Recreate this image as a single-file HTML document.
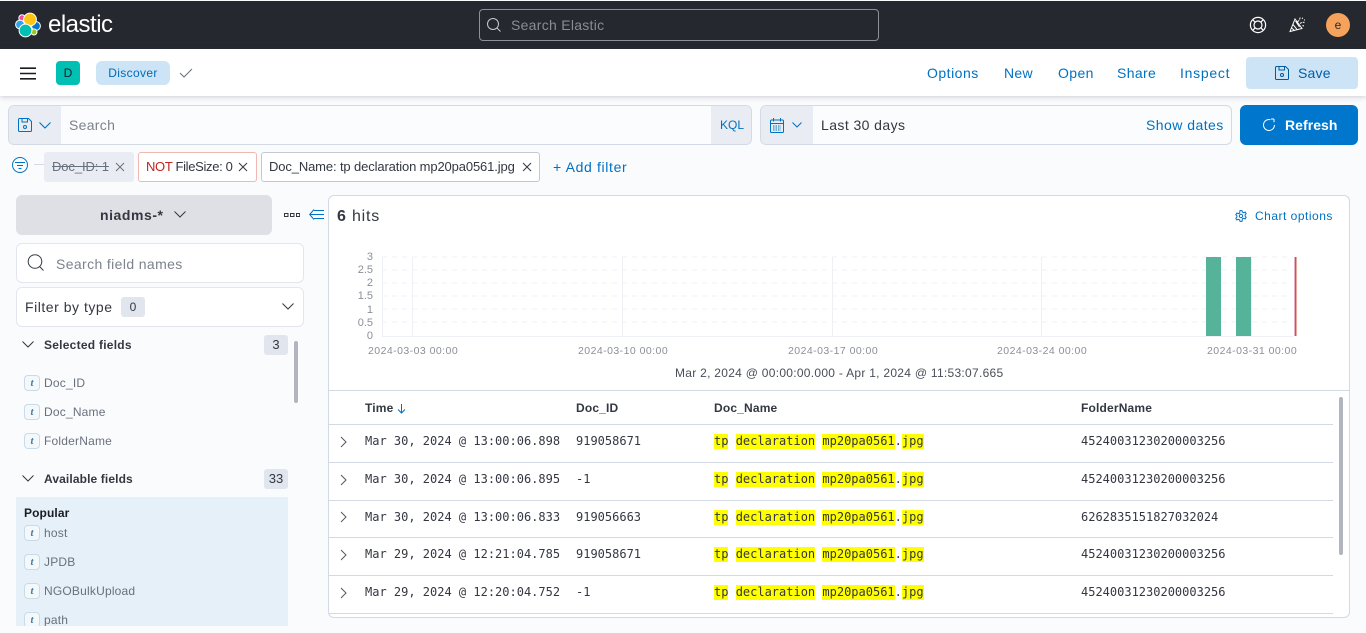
<!DOCTYPE html>
<html lang="en"><head><meta charset="utf-8"><title>Discover - Elastic</title>
<style>
html,body{margin:0;padding:0;width:1366px;height:633px;overflow:hidden;background:#fafbfd;font-family:"Liberation Sans",sans-serif;color:#343741}
.a,.t,svg.i{position:absolute}
.a{box-sizing:border-box}
.t{white-space:nowrap;font-size:14px;letter-spacing:.3px;line-height:20px}
.b{color:#0071c2}
.sb{font-weight:700;font-size:12px;color:#343741;letter-spacing:.25px}
.f{font-size:12px;color:#69707d;letter-spacing:.2px}
.badge{position:absolute;background:#e0e5ee;border-radius:3px;width:24px;height:20px;text-align:center;line-height:20px;font-size:12px;color:#343741}
.ti{position:absolute;left:24px;width:16px;height:16px;box-sizing:border-box;border:1px solid #c9dbe9;border-radius:4px;background:#f3f8fb;color:#4d7a9f;font:italic bold 11px/14px "Liberation Serif",serif;text-align:center}
.m{font:12px/16px "DejaVu Sans Mono",monospace;color:#343741;position:absolute;white-space:pre}
mark{background:#ff0;color:#343741;display:inline-block;line-height:15px}
.ln{position:absolute;left:329px;width:1004px;height:1px;background:#d3dae6}
.ax{position:absolute;font-size:11px;color:#8b8f98;line-height:12px;white-space:nowrap}
.x{font-size:10.5px;letter-spacing:.45px}
.h{font-weight:700;font-size:12px;color:#343741;letter-spacing:.17px}
svg{fill:none}
</style></head><body>

<!-- top bar -->
<div class="a" style="left:0;top:1px;width:1366px;height:48px;background:#25282f"></div>
<svg class="i" style="left:14px;top:11px" width="28" height="28" viewBox="14 11 28 28">
<g stroke="#fff" stroke-width="1">
<circle cx="22" cy="18" r="3.2" fill="#ee4f9f"/><circle cx="20" cy="24.5" r="4.4" fill="#2fa4e7"/><circle cx="36" cy="26" r="4.4" fill="#0077cc"/><circle cx="34" cy="32" r="3" fill="#93c90e"/><circle cx="30" cy="19.5" r="6.4" fill="#fec514"/><circle cx="25.5" cy="30.5" r="6.4" fill="#00bfb3"/></g></svg>
<div class="t" style="left:48px;top:11px;font-size:24px;line-height:28px;color:#fff;letter-spacing:-.5px">elastic</div>
<div class="a" style="left:479px;top:9px;width:400px;height:32px;background:#25282f;border:1px solid #8f9197;border-radius:4px"></div>
<svg class="i" style="left:486px;top:17px" width="16" height="16" viewBox="0 0 16 16" stroke="#c8c9cc" stroke-width="1"><circle cx="7" cy="7" r="5.5"/><path d="M11 11l3.500 3.500"/></svg>
<div class="t" style="left:511px;top:15px;color:#8a8d93;letter-spacing:.28px">Search Elastic</div>
<svg class="i" style="left:1249px;top:16px" width="18" height="18" viewBox="0 0 18 18" stroke="#fff" stroke-width="1.2"><circle cx="9" cy="9" r="7.6"/><circle cx="9" cy="9" r="4"/><path d="M3.6 3.6l2.6 2.6M14.4 3.6l-2.6 2.6M3.6 14.4l2.6-2.6M14.4 14.4l-2.6-2.6"/></svg>
<svg class="i" style="left:1289px;top:16px" width="18" height="18" viewBox="0 0 18 18" stroke="#fff" stroke-width="1"><path d="M1 15.5L6 3l7 9.5zM4 8.5l4.500 5.600M2.700 12l3 2.700M6.500 5l4 6"/><path d="M8.500 5.500C10 5 11 3.500 11 1.500M11 7.500c1.500-1 2.500-1.500 4.500-1M13 2l1 .5M15.500 3.500v1M13.500 9.500l1.500.5" stroke-dasharray="2 1"/></svg>
<div class="a" style="left:1326px;top:13px;width:24px;height:24px;border-radius:50%;background:#f5a35c;color:#25282f;font-size:12px;line-height:24px;text-align:center">e</div>

<!-- app bar -->
<div class="a" style="left:0;top:49px;width:1366px;height:47px;background:#fff;box-shadow:0 1px 5px rgba(60,70,90,.25)"></div>
<svg class="i" style="left:20px;top:67px" width="16" height="13" viewBox="0 0 16 13" stroke="#1a1c21" stroke-width="1.600"><path d="M0 1.200h16M0 6.500h16M0 11.800h16"/></svg>
<div class="a" style="left:56px;top:61px;width:24px;height:24px;border-radius:4px;background:#00bfb3;color:#1a1c21;font-size:12px;line-height:24px;text-align:center">D</div>
<div class="a" style="left:96px;top:61px;width:74px;height:24px;border-radius:6px;background:#cce4f5;color:#006bb8;font-size:12px;font-weight:400;line-height:24px;text-align:center;letter-spacing:.35px">Discover</div>
<svg class="i" style="left:179px;top:67px" width="14" height="12" viewBox="0 0 14 12" stroke="#69707d"><path d="M1 6l4 4 8-8"/></svg>
<div class="t b" style="left:927px;top:63px;letter-spacing:.5px">Options</div>
<div class="t b" style="left:1004px;top:63px;letter-spacing:.3px">New</div>
<div class="t b" style="left:1058px;top:63px;letter-spacing:.4px">Open</div>
<div class="t b" style="left:1117px;top:63px;letter-spacing:.35px">Share</div>
<div class="t b" style="left:1180px;top:63px;letter-spacing:.72px">Inspect</div>
<div class="a" style="left:1246px;top:57px;width:112px;height:32px;border-radius:4px;background:#cce4f5"></div>
<svg class="i" style="left:1275px;top:66px" width="14" height="14" viewBox="0 0 14 14" stroke="#005a9e"><path d="M.5 1.500a1 1 0 011-1h9l3 3v9a1 1 0 01-1 1h-11a1 1 0 01-1-1zM4 .5v3.500h5.500V.5"/><circle cx="7" cy="9" r="1.500"/></svg>
<div class="t" style="left:1298px;top:63px;color:#005fa8;letter-spacing:.2px">Save</div>

<!-- query bar -->
<div class="a" style="left:8px;top:105px;width:744px;height:40px;border:1px solid #d3dae6;border-radius:6px;background:#fbfcfd;overflow:hidden">
<div class="a" style="left:0;top:0;width:52px;height:38px;background:#e9edf3"></div>
<div class="a" style="right:0;top:0;width:40px;height:38px;background:#e9edf3"></div></div>
<svg class="i" style="left:18px;top:118px" width="14" height="14" viewBox="0 0 14 14" stroke="#0071c2"><path d="M.5 1.500a1 1 0 011-1h9l3 3v9a1 1 0 01-1 1h-11a1 1 0 01-1-1zM4 .5v3.500h5.500V.5"/><circle cx="7" cy="9" r="1.500"/></svg>
<svg class="i" style="left:38px;top:121px" width="14" height="9" viewBox="0 0 14 9" stroke="#0071c2" stroke-width="1.100"><path d="M1.500 1.500l5.500 5.500 5.500-5.500"/></svg>
<div class="t" style="left:69px;top:115px;color:#7d828c;letter-spacing:.3px">Search</div>
<div class="t b" style="left:720px;top:115px;font-size:12px;letter-spacing:0">KQL</div>

<div class="a" style="left:760px;top:105px;width:472px;height:40px;border:1px solid #d3dae6;border-radius:6px;background:#fbfcfd;overflow:hidden">
<div class="a" style="left:0;top:0;width:52px;height:38px;background:#e9edf3"></div></div>
<svg class="i" style="left:770px;top:118px" width="14" height="15" viewBox="0 0 14 15" stroke="#0071c2"><rect x=".5" y="2" width="13" height="12.500" rx="1"/><path d="M.5 5.500h13M3.500 0v3.500M10.500 0v3.500"/><path d="M3 8h8M3 10h8M3 12h8" stroke-dasharray="1.500 1"/></svg>
<svg class="i" style="left:791px;top:121px" width="12" height="8" viewBox="0 0 12 8" stroke="#0071c2"><path d="M1.500 1.500l4.500 4.500 4.500-4.500"/></svg>
<div class="t" style="left:821px;top:115px;letter-spacing:.42px">Last 30 days</div>
<div class="t b" style="left:1146px;top:115px;letter-spacing:.46px">Show dates</div>
<div class="a" style="left:1240px;top:105px;width:118px;height:40px;border-radius:6px;background:#0077cc"></div>
<svg class="i" style="left:1262px;top:118px" width="14" height="14" viewBox="0 0 14 14" stroke="#fff"><path d="M8.500 1.700A5.500 5.500 0 1012.500 7M9 1l3 0M12 1v3.200" /></svg>
<div class="t" style="left:1285px;top:115px;color:#fff;font-weight:700;letter-spacing:.05px">Refresh</div>

<!-- filter bar -->
<svg class="i" style="left:11px;top:156px" width="18" height="18" viewBox="0 0 18 18" stroke="#0071c2"><circle cx="9" cy="9" r="7.500"/><path d="M4 6.500h10M6 9.500h6M7.500 12.500h3"/></svg>
<div class="a" style="left:34px;top:164px;width:12px;height:1px;background:#d3dae6"></div>
<div class="a" style="left:44px;top:152px;width:90px;height:30px;border-radius:3px;background:#e9edf3"></div>
<div class="t" style="left:52px;top:157px;font-size:13px;color:#69707d;letter-spacing:-.1px;text-decoration:line-through">Doc_ID: 1</div>
<svg class="i" style="left:115px;top:162px" width="10" height="10" viewBox="0 0 10 10" stroke="#69707d"><path d="M1 1l8 8M9 1l-8 8"/></svg>
<div class="a" style="left:138px;top:152px;width:119px;height:30px;border-radius:3px;background:#fff;border:1px solid #f0b8b0"></div>
<div class="t" style="left:146px;top:157px;font-size:13px;letter-spacing:-.33px"><span style="color:#bd271e">NOT</span> FileSize: 0</div>
<svg class="i" style="left:238px;top:162px" width="10" height="10" viewBox="0 0 10 10" stroke="#343741"><path d="M1 1l8 8M9 1l-8 8"/></svg>
<div class="a" style="left:261px;top:152px;width:279px;height:30px;border-radius:3px;background:#fff;border:1px solid #c2c8d3"></div>
<div class="t" style="left:269px;top:157px;font-size:13px;letter-spacing:-.13px">Doc_Name: tp declaration mp20pa0561.jpg</div>
<svg class="i" style="left:522px;top:162px" width="10" height="10" viewBox="0 0 10 10" stroke="#343741"><path d="M1 1l8 8M9 1l-8 8"/></svg>
<div class="t b" style="left:553px;top:157px;letter-spacing:.65px">+ Add filter</div>

<!-- sidebar -->
<div class="a" style="left:16px;top:195px;width:256px;height:40px;border-radius:6px;background:#dfe0e5"></div>
<div class="t" style="left:100px;top:205px;font-weight:700;letter-spacing:.55px">niadms-*</div>
<svg class="i" style="left:173px;top:210px" width="14" height="9" viewBox="0 0 14 9" stroke="#343741"><path d="M1.500 1.500l5.500 5.500 5.500-5.500"/></svg>
<svg class="i" style="left:284px;top:212px" width="16" height="6" viewBox="0 0 16 6" stroke="#343741"><rect x=".5" y="1.500" width="3.500" height="3"/><rect x="6.500" y="1.500" width="3.500" height="3"/><rect x="12.500" y="1.500" width="3.200" height="3"/></svg>
<svg class="i" style="left:309px;top:209px" width="15" height="11" viewBox="0 0 15 11" stroke="#0071c2"><path d="M5 .5L.7 5.500 5 10.500M1 5.500h14M5 1.500h10M5 9.500h10"/></svg>

<div class="a" style="left:16px;top:243px;width:288px;height:40px;border:1px solid #e3e6ef;border-radius:6px;background:#fff"></div>
<svg class="i" style="left:27px;top:254px" width="18" height="18" viewBox="0 0 18 18" stroke="#343741"><circle cx="8" cy="7.500" r="6.800"/><path d="M12.500 12.500l4 4"/></svg>
<div class="t" style="left:56px;top:254px;color:#7d828c;letter-spacing:.38px">Search field names</div>
<div class="a" style="left:16px;top:287px;width:288px;height:40px;border:1px solid #e3e6ef;border-radius:6px;background:#fff"></div>
<div class="t" style="left:25px;top:297px;letter-spacing:.53px">Filter by type</div>
<div class="badge" style="left:121px;top:297px">0</div>
<svg class="i" style="left:281px;top:302px" width="14" height="9" viewBox="0 0 14 9" stroke="#343741"><path d="M1.500 1.500l5.500 5.500 5.500-5.500"/></svg>

<svg class="i" style="left:21px;top:340px" width="14" height="9" viewBox="0 0 14 9" stroke="#343741"><path d="M1.500 1.500l5.500 5.500 5.500-5.500"/></svg>
<div class="t sb" style="left:44px;top:335px">Selected fields</div>
<div class="badge" style="left:264px;top:335px;font-size:13px">3</div>
<div class="a" style="left:294px;top:341px;width:4px;height:62px;background:#b2b5bd;border-radius:2px"></div>
<div class="ti" style="top:375px">t</div><div class="t f" style="left:44px;top:373px">Doc_ID</div>
<div class="ti" style="top:404px">t</div><div class="t f" style="left:44px;top:402px">Doc_Name</div>
<div class="ti" style="top:433px">t</div><div class="t f" style="left:44px;top:431px">FolderName</div>

<svg class="i" style="left:21px;top:474px" width="14" height="9" viewBox="0 0 14 9" stroke="#343741"><path d="M1.500 1.500l5.500 5.500 5.500-5.500"/></svg>
<div class="t sb" style="left:44px;top:469px;letter-spacing:.12px">Available fields</div>
<div class="badge" style="left:264px;top:469px;font-size:13px">33</div>

<div class="a" style="left:16px;top:497px;width:272px;height:129px;background:#e6f0f8;overflow:hidden">
<div class="t" style="left:8px;top:6px;font-size:12px;font-weight:700;color:#1a1c21;letter-spacing:.1px">Popular</div>
<div class="ti" style="left:8px;top:28px">t</div><div class="t f" style="left:28px;top:26px">host</div>
<div class="ti" style="left:8px;top:57px">t</div><div class="t f" style="left:28px;top:55px">JPDB</div>
<div class="ti" style="left:8px;top:86px">t</div><div class="t f" style="left:28px;top:84px">NGOBulkUpload</div>
<div class="ti" style="left:8px;top:115px">t</div><div class="t f" style="left:28px;top:113px">path</div>
</div>

<!-- main panel -->
<div class="a" style="left:328px;top:195px;width:1022px;height:423px;border:1px solid #d3dae6;border-radius:6px;background:#fff"></div>
<div class="t" style="left:337px;top:207px;font-size:16px;letter-spacing:.8px"><b>6</b> hits</div>
<svg class="i" style="left:1235px;top:210px" width="12" height="12" viewBox="0 0 12 12" stroke="#0071c2"><path d="M5 .6h2l.4 1.500 1.300.6 1.400-.7 1.100 1.700-1.100 1.100v1.400l1.100 1.100-1.100 1.700-1.400-.7-1.300.6L7 11.400H5l-.4-1.500-1.300-.6-1.400.7L.8 8.300l1.100-1.100V5.800L.8 4.700l1.100-1.700 1.400.7 1.300-.6z"/><circle cx="6" cy="6" r="1.700"/></svg>
<div class="t b" style="left:1255px;top:206px;font-size:12px;letter-spacing:.5px">Chart options</div>

<!-- chart -->
<svg class="i" style="left:375px;top:250px" width="930" height="95" viewBox="375 250 930 95">
<g stroke="#f1f2f5" stroke-width="1">
<path d="M382 257h911M382 270h911M382 283h911M382 296h911M382 309h911M382 322h911" stroke-dasharray="5 5"/>
<path d="M382.500 257v79.500M412.500 257v79M622.500 257v79M832.500 257v79M1041.500 257v79M1251.500 257v79M382 336.500h911" stroke="#eef0f3"/></g>
<rect x="1206" y="257" width="15" height="79" fill="#54b399"/><rect x="1236" y="257" width="15" height="79" fill="#54b399"/>
<rect x="1294.500" y="257" width="2" height="79" fill="#d36086"/><rect x="1295" y="257" width="1.500" height="79" fill="#cc5642"/>
</svg>
<div class="ax" style="right:993px;top:251px">3</div>
<div class="ax" style="right:993px;top:264px">2.5</div>
<div class="ax" style="right:993px;top:277px">2</div>
<div class="ax" style="right:993px;top:290px">1.5</div>
<div class="ax" style="right:993px;top:304px">1</div>
<div class="ax" style="right:993px;top:317px">0.5</div>
<div class="ax" style="right:993px;top:330px">0</div>
<div class="ax x" style="left:368px;top:345px">2024-03-03 00:00</div>
<div class="ax x" style="left:578px;top:345px">2024-03-10 00:00</div>
<div class="ax x" style="left:788px;top:345px">2024-03-17 00:00</div>
<div class="ax x" style="left:997px;top:345px">2024-03-24 00:00</div>
<div class="ax x" style="left:1207px;top:345px">2024-03-31 00:00</div>
<div class="t" style="left:675px;top:363px;font-size:12px;letter-spacing:.28px;color:#4a4e58">Mar 2, 2024 @ 00:00:00.000 - Apr 1, 2024 @ 11:53:07.665</div>
<div class="a" style="left:329px;top:390px;width:1020px;height:1px;background:#d3dae6"></div>

<!-- table -->
<div class="t h" style="left:365px;top:398px">Time</div>
<svg class="i" style="left:397px;top:404px" width="9" height="10" viewBox="0 0 9 10" stroke="#0071c2"><path d="M4.500 0v9M1 5.500l3.500 3.500L8 5.500"/></svg>
<div class="t h" style="left:576px;top:398px">Doc_ID</div>
<div class="t h" style="left:714px;top:398px">Doc_Name</div>
<div class="t h" style="left:1081px;top:398px">FolderName</div>
<div class="ln" style="top:424px"></div><div class="ln" style="top:462px"></div><div class="ln" style="top:500px"></div><div class="ln" style="top:537px"></div><div class="ln" style="top:575px"></div><div class="ln" style="top:613px"></div>
<div class="a" style="left:1339px;top:397px;width:4px;height:158px;background:#b2b5bd;border-radius:2px"></div>

<svg class="i" style="left:340px;top:436px" width="7" height="12" viewBox="0 0 7 12" stroke="#545861"><path d="M1 1l5 5-5 5"/></svg>
<div class="m" style="left:365px;top:433px">Mar 30, 2024 @ 13:00:06.898</div><div class="m" style="left:576px;top:433px">919058671</div>
<div class="m" style="left:714px;top:433px"><mark>tp</mark> <mark>declaration</mark> <mark>mp20pa0561</mark>.<mark>jpg</mark></div><div class="m" style="left:1081px;top:433px">45240031230200003256</div>

<svg class="i" style="left:340px;top:474px" width="7" height="12" viewBox="0 0 7 12" stroke="#545861"><path d="M1 1l5 5-5 5"/></svg>
<div class="m" style="left:365px;top:471px">Mar 30, 2024 @ 13:00:06.895</div><div class="m" style="left:576px;top:471px">-1</div>
<div class="m" style="left:714px;top:471px"><mark>tp</mark> <mark>declaration</mark> <mark>mp20pa0561</mark>.<mark>jpg</mark></div><div class="m" style="left:1081px;top:471px">45240031230200003256</div>

<svg class="i" style="left:340px;top:511px" width="7" height="12" viewBox="0 0 7 12" stroke="#545861"><path d="M1 1l5 5-5 5"/></svg>
<div class="m" style="left:365px;top:509px">Mar 30, 2024 @ 13:00:06.833</div><div class="m" style="left:576px;top:509px">919056663</div>
<div class="m" style="left:714px;top:509px"><mark>tp</mark> <mark>declaration</mark> <mark>mp20pa0561</mark>.<mark>jpg</mark></div><div class="m" style="left:1081px;top:509px">6262835151827032024</div>

<svg class="i" style="left:340px;top:549px" width="7" height="12" viewBox="0 0 7 12" stroke="#545861"><path d="M1 1l5 5-5 5"/></svg>
<div class="m" style="left:365px;top:546px">Mar 29, 2024 @ 12:21:04.785</div><div class="m" style="left:576px;top:546px">919058671</div>
<div class="m" style="left:714px;top:546px"><mark>tp</mark> <mark>declaration</mark> <mark>mp20pa0561</mark>.<mark>jpg</mark></div><div class="m" style="left:1081px;top:546px">45240031230200003256</div>

<svg class="i" style="left:340px;top:587px" width="7" height="12" viewBox="0 0 7 12" stroke="#545861"><path d="M1 1l5 5-5 5"/></svg>
<div class="m" style="left:365px;top:584px">Mar 29, 2024 @ 12:20:04.752</div><div class="m" style="left:576px;top:584px">-1</div>
<div class="m" style="left:714px;top:584px"><mark>tp</mark> <mark>declaration</mark> <mark>mp20pa0561</mark>.<mark>jpg</mark></div><div class="m" style="left:1081px;top:584px">45240031230200003256</div>

</body></html>
